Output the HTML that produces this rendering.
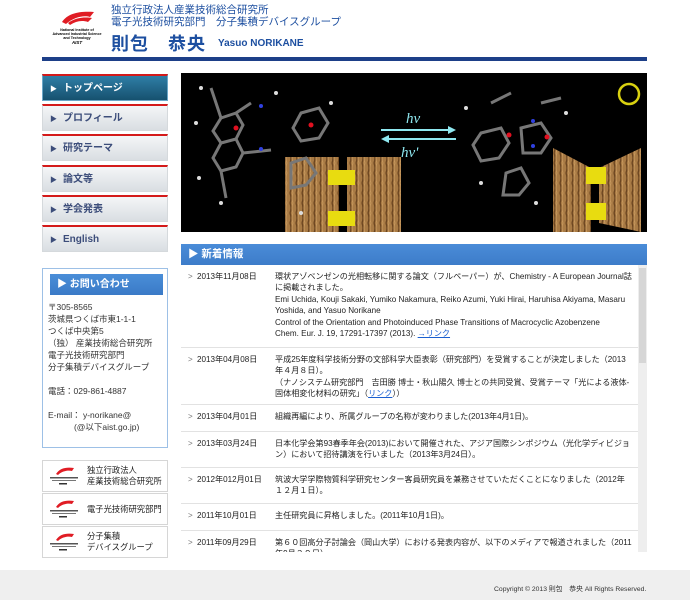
<!DOCTYPE html>
<html><head><meta charset="utf-8">
<style>
*{margin:0;padding:0;box-sizing:border-box}
body{width:690px;height:600px;background:#fff;font-family:"Liberation Sans","Noto Sans CJK JP",sans-serif;position:relative;overflow:hidden;color:#333}
.abs{position:absolute}
.hd1{left:111px;top:4px;font-size:10.5px;color:#1d4fa0;line-height:12px;font-weight:normal}
.name{left:111px;top:30px;font-size:18px;color:#1d4fa0;font-weight:bold;letter-spacing:1px}
.en{left:218px;top:38px;font-size:10px;color:#1d4fa0;font-weight:bold}
.line{left:42px;top:57px;width:605px;height:4px;background:#1d3f88}
.nav{left:42px;width:126px;height:27px;background:linear-gradient(#f4f6f7,#d9dee2);border:1px solid #d5d9dc;border-top:2px solid #d41a1a;font-size:10px;font-weight:bold;color:#3c4d7a;padding-left:7px;line-height:25px}
.nav.on{background:linear-gradient(#2f7ea6,#16516f);color:#fff;border-color:#6aa7c8;border-top:2px solid #d41a1a}
.nav b{font-size:7px;margin-right:6px}
.contact{left:42px;top:268px;width:126px;height:180px;border:1px solid #9dc0e6}
.ch{position:absolute;left:7px;top:5px;width:113px;height:21px;background:linear-gradient(#4a8ed8,#3a7ac7);color:#fff;font-size:10px;font-weight:bold;line-height:21px;padding-left:7px}
.ct{position:absolute;left:5px;top:32px;font-size:8.5px;line-height:12px;color:#333;white-space:nowrap}
.ban{left:42px;width:126px;height:32px;border:1px solid #d6d6d6;background:#fff}
.ban .t{position:absolute;left:44px;font-size:8.3px;line-height:11px;color:#222;white-space:nowrap}
.img{left:181px;top:73px;width:466px;height:159px;background:#000;overflow:hidden}
.nh{left:181px;top:244px;width:466px;height:21px;background:linear-gradient(#4a8cd8,#3d7cc9);color:#fff;font-size:10.5px;font-weight:bold;line-height:21px;padding-left:7px}
.list{left:181px;top:265px;width:457px;height:287px;overflow:hidden}
.row{border-bottom:1px solid #e2e2e2;position:relative;font-size:8.1px;line-height:11.4px;padding:6px 0 7px 0;color:#222}
.row .a{position:absolute;left:7px;top:6px;color:#777;font-size:8px}
.row .d{position:absolute;left:16px;top:6px}
.row .x{margin-left:94px;margin-right:6px}
.row a{color:#1a5fd0;text-decoration:underline}
.sb{left:638px;top:265px;width:9px;height:287px;background:#eee}
.sbt{left:639px;top:268px;width:7px;height:95px;background:#d6d6d6}
.foot{left:0;top:570px;width:690px;height:30px;background:#efefef}
.ft{left:494px;top:583px;font-size:6.8px;color:#333;white-space:nowrap}
</style></head><body>

<svg class="abs" style="left:44px;top:8px" width="66" height="40" viewBox="0 0 66 40">
<path d="M18 14 C24 5 36 3 50 4 L46 9 C40 7 30 9 22 16 Z" fill="#e01c24"/>
<path d="M24 15 C32 9 42 9 48 10 L44 14 C38 12 32 13 26 17 Z" fill="#e01c24"/>
<text x="33" y="23" font-size="3.6" text-anchor="middle" font-family="Liberation Sans" font-weight="bold">National Institute of</text>
<text x="33" y="27" font-size="3.6" text-anchor="middle" font-family="Liberation Sans" font-weight="bold">Advanced Industrial Science</text>
<text x="33" y="31" font-size="3.6" text-anchor="middle" font-family="Liberation Sans" font-weight="bold">and Technology</text>
<text x="33" y="36" font-size="4.5" text-anchor="middle" font-family="Liberation Sans" font-weight="bold" font-style="italic">AIST</text>
</svg>
<div class="abs hd1">独立行政法人産業技術総合研究所<br>電子光技術研究部門　分子集積デバイスグループ</div>
<div class="abs name">則包　恭央</div>
<div class="abs en">Yasuo NORIKANE</div>
<div class="abs line"></div>

<div class="abs nav on" style="top:74px"><b>▶</b>トップページ</div>
<div class="abs nav" style="top:104px"><b>▶</b>プロフィール</div>
<div class="abs nav" style="top:134px"><b>▶</b>研究テーマ</div>
<div class="abs nav" style="top:165px"><b>▶</b>論文等</div>
<div class="abs nav" style="top:195px"><b>▶</b>学会発表</div>
<div class="abs nav" style="top:225px"><b>▶</b>English</div>

<div class="abs contact"><div class="ch">▶ お問い合わせ</div>
<div class="ct">〒305-8565<br>茨城県つくば市東1-1-1<br>つくば中央第5<br>（独） 産業技術総合研究所<br>電子光技術研究部門<br>分子集積デバイスグループ<br><br>電話：029-861-4887<br><br>E-mail： y-norikane@<br>&nbsp;&nbsp;&nbsp;&nbsp;&nbsp;&nbsp;&nbsp;&nbsp;&nbsp;&nbsp;&nbsp;(@以下aist.go.jp)</div></div>

<div class="abs ban" style="top:460px"><svg class="abs" style="left:3px;top:5px" width="36" height="22"><path d="M10 8 C14 2 20 1 28 2 L26 5 C22 4 16 5 12 9Z" fill="#e01c24"/><rect x="4" y="11" width="28" height="1.5" fill="#555"/><rect x="6" y="14" width="24" height="1" fill="#777"/><rect x="13" y="17" width="8" height="1.5" fill="#333"/></svg><div class="t" style="top:4px">独立行政法人<br>産業技術総合研究所</div></div>
<div class="abs ban" style="top:493px"><svg class="abs" style="left:3px;top:5px" width="36" height="22"><path d="M10 8 C14 2 20 1 28 2 L26 5 C22 4 16 5 12 9Z" fill="#e01c24"/><rect x="4" y="11" width="28" height="1.5" fill="#555"/><rect x="6" y="14" width="24" height="1" fill="#777"/><rect x="13" y="17" width="8" height="1.5" fill="#333"/></svg><div class="t" style="top:10px">電子光技術研究部門</div></div>
<div class="abs ban" style="top:526px"><svg class="abs" style="left:3px;top:5px" width="36" height="22"><path d="M10 8 C14 2 20 1 28 2 L26 5 C22 4 16 5 12 9Z" fill="#e01c24"/><rect x="4" y="11" width="28" height="1.5" fill="#555"/><rect x="6" y="14" width="24" height="1" fill="#777"/><rect x="13" y="17" width="8" height="1.5" fill="#333"/></svg><div class="t" style="top:4px">分子集積<br>デバイスグループ</div></div>

<div class="abs img">
<svg width="466" height="159" viewBox="0 0 466 159">
<defs><pattern id="w" width="6" height="10" patternUnits="userSpaceOnUse"><rect width="6" height="10" fill="#a87a44"/><path d="M1 0 Q3 5 1 10" stroke="#6b4520" stroke-width="1.4" fill="none"/><path d="M4 0 Q2 5 4 10" stroke="#c99a5f" stroke-width="1" fill="none"/></pattern></defs>
<rect x="104" y="84" width="54" height="75" fill="url(#w)"/>
<rect x="166" y="84" width="54" height="75" fill="url(#w)"/>
<rect x="147" y="97" width="27" height="15" fill="#e8dc10"/><rect x="147" y="138" width="27" height="15" fill="#e8dc10"/>
<polygon points="372,75 410,95 410,159 372,159" fill="url(#w)"/>
<polygon points="418,95 460,75 460,159 418,150" fill="url(#w)"/>
<rect x="405" y="94" width="20" height="17" fill="#e8dc10"/><rect x="405" y="130" width="20" height="17" fill="#e8dc10"/>
<line x1="200" y1="57" x2="267" y2="57" stroke="#8fe8f0" stroke-width="2"/><polygon points="267,53 275,57 267,61" fill="#8fe8f0"/>
<line x1="208" y1="66" x2="275" y2="66" stroke="#8fe8f0" stroke-width="2"/><polygon points="208,62 200,66 208,70" fill="#8fe8f0"/>
<text x="225" y="50" font-size="15" font-style="italic" fill="#8fe8f0" font-family="Liberation Serif">hν</text>
<text x="220" y="84" font-size="15" font-style="italic" fill="#8fe8f0" font-family="Liberation Serif">hν'</text>
<circle cx="448" cy="21" r="10" fill="none" stroke="#d8d010" stroke-width="2.5"/>
<g stroke="#777" stroke-width="3" fill="none">
<path d="M40 45 L55 40 L62 52 L55 66 L40 70 L32 58Z M40 70 L55 66 L62 80 L55 94 L40 98 L32 85Z M55 40 L70 30 M62 80 L90 77"/>
<path d="M120 40 L138 35 L147 50 L138 65 L120 68 L112 55Z M110 90 L125 85 L135 100 L125 112 L110 115Z M30 15 L40 45 M40 98 L45 125"/>
<path d="M300 60 L320 55 L328 70 L318 85 L300 88 L292 72Z M325 100 L340 95 L348 110 L338 122 L322 122Z M340 55 L360 50 L370 65 L360 80 L342 80Z M310 30 L330 20 M360 30 L380 25"/>
</g>
<g fill="#ddd"><circle cx="20" cy="15" r="2"/><circle cx="15" cy="50" r="2"/><circle cx="18" cy="105" r="2"/><circle cx="40" cy="130" r="2"/><circle cx="95" cy="20" r="2"/><circle cx="150" cy="30" r="2"/><circle cx="285" cy="35" r="2"/><circle cx="300" cy="110" r="2"/><circle cx="385" cy="40" r="2"/><circle cx="355" cy="130" r="2"/><circle cx="120" cy="140" r="2"/></g>
<g fill="#3040e0"><circle cx="80" cy="33" r="2"/><circle cx="80" cy="76" r="2"/><circle cx="352" cy="48" r="2"/><circle cx="352" cy="73" r="2"/></g>
<g fill="#e01020"><circle cx="55" cy="55" r="2.5"/><circle cx="130" cy="52" r="2.5"/><circle cx="328" cy="62" r="2.5"/><circle cx="366" cy="64" r="2.5"/></g>
</svg></div>

<div class="abs nh">▶ 新着情報</div>
<div class="abs list">
<div class="row" style="height:83px"><span class="a">&gt;</span><span class="d">2013年11月08日</span><div class="x">環状アゾベンゼンの光相転移に関する論文（フルペーパー）が、Chemistry - A European Journal誌に掲載されました。<br>Emi Uchida, Kouji Sakaki, Yumiko Nakamura, Reiko Azumi, Yuki Hirai, Haruhisa Akiyama, Masaru Yoshida, and Yasuo Norikane<br>Control of the Orientation and Photoinduced Phase Transitions of Macrocyclic Azobenzene<br>Chem. Eur. J. 19, 17291-17397 (2013). <a>→リンク</a></div></div>
<div class="row" style="height:57px"><span class="a">&gt;</span><span class="d">2013年04月08日</span><div class="x">平成25年度科学技術分野の文部科学大臣表彰（研究部門）を受賞することが決定しました（2013年４月８日）。<br>（ナノシステム研究部門　吉田勝 博士・秋山陽久 博士との共同受賞、受賞テーマ「光による液体-固体相変化材料の研究」（<a>リンク</a>））</div></div>
<div class="row" style="height:27px"><span class="a">&gt;</span><span class="d">2013年04月01日</span><div class="x">組織再編により、所属グループの名称が変わりました(2013年4月1日)。</div></div>
<div class="row" style="height:36px"><span class="a">&gt;</span><span class="d">2013年03月24日</span><div class="x">日本化学会第93春季年会(2013)において開催された、アジア国際シンポジウム（光化学ディビジョン）において招待講演を行いました（2013年3月24日）。</div></div>
<div class="row" style="height:36px"><span class="a">&gt;</span><span class="d">2012年012月01日</span><div class="x">筑波大学学際物質科学研究センター客員研究員を兼務させていただくことになりました（2012年１２月１日）。</div></div>
<div class="row" style="height:27px"><span class="a">&gt;</span><span class="d">2011年10月01日</span><div class="x">主任研究員に昇格しました。(2011年10月1日)。</div></div>
<div class="row" style="height:36px"><span class="a">&gt;</span><span class="d">2011年09月29日</span><div class="x">第６０回高分子討論会（岡山大学）における発表内容が、以下のメディアで報道されました（2011年9月２９日）</div></div>
</div>
<div class="abs sb"></div><div class="abs sbt"></div>

<div class="abs foot"></div>
<div class="abs ft">Copyright © 2013 則包　恭央 All Rights Reserved.</div>
</body></html>
